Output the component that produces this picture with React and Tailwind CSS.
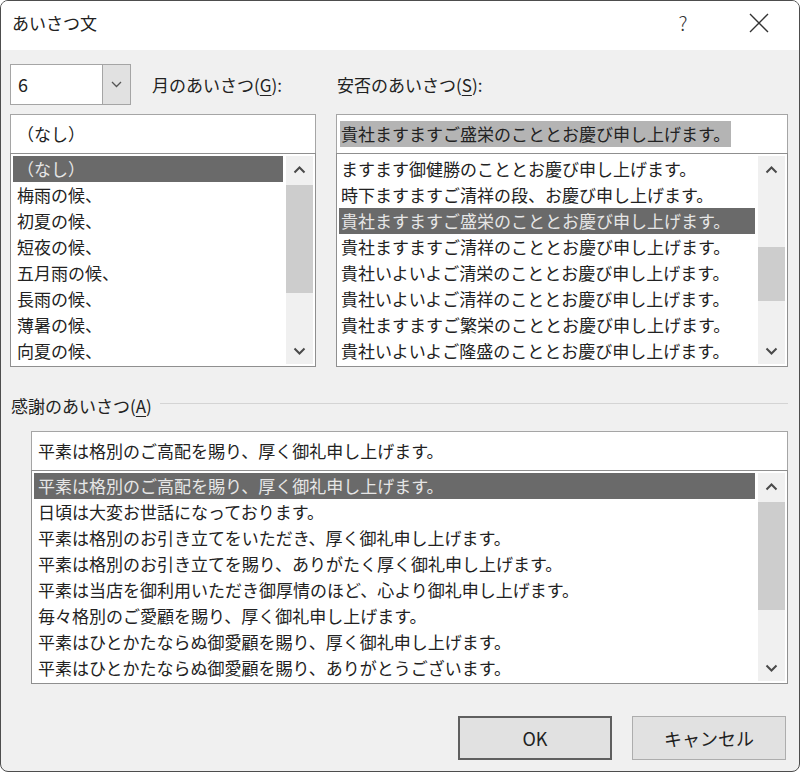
import React from 'react'

const monthItems = ['（なし）', '梅雨の候、', '初夏の候、', '短夜の候、', '五月雨の候、', '長雨の候、', '薄暑の候、', '向夏の候、']
const safetyItems = [
  'ますます御健勝のこととお慶び申し上げます。',
  '時下ますますご清祥の段、お慶び申し上げます。',
  '貴社ますますご盛栄のこととお慶び申し上げます。',
  '貴社ますますご清祥のこととお慶び申し上げます。',
  '貴社いよいよご清栄のこととお慶び申し上げます。',
  '貴社いよいよご清祥のこととお慶び申し上げます。',
  '貴社ますますご繁栄のこととお慶び申し上げます。',
  '貴社いよいよご隆盛のこととお慶び申し上げます。',
]
const thanksItems = [
  '平素は格別のご高配を賜り、厚く御礼申し上げます。',
  '日頃は大変お世話になっております。',
  '平素は格別のお引き立てをいただき、厚く御礼申し上げます。',
  '平素は格別のお引き立てを賜り、ありがたく厚く御礼申し上げます。',
  '平素は当店を御利用いただき御厚情のほど、心より御礼申し上げます。',
  '毎々格別のご愛顧を賜り、厚く御礼申し上げます。',
  '平素はひとかたならぬ御愛顧を賜り、厚く御礼申し上げます。',
  '平素はひとかたならぬ御愛顧を賜り、ありがとうございます。',
]

const Chevron = ({ up, className = '' }) => (
  <svg width="13" height="8" viewBox="0 0 13 8" className={className}>
    <polyline
      points={up ? '1.5,6.5 6.5,1.5 11.5,6.5' : '1.5,1.5 6.5,6.5 11.5,1.5'}
      fill="none"
      stroke="#4a4a4a"
      strokeWidth="2"
    />
  </svg>
)

// vertical scrollbar: arrow, track with thumb, arrow
const ScrollBar = ({ thumbOffset, thumbHeight }) => (
  <div className="w-[27px] flex flex-col bg-[#f0f0f0]">
    <div className="h-[27px] flex items-center justify-center">
      <Chevron up />
    </div>
    <div className="flex-1 flex flex-col">
      <div className={thumbOffset} />
      <div className={`${thumbHeight} bg-[#cdcdcd]`} />
    </div>
    <div className="h-[27px] flex items-center justify-center">
      <Chevron />
    </div>
  </div>
)

const ListBox = ({ items, selected, pad, thumbOffset, thumbHeight }) => (
  <div className="h-[214px] border border-[#8f8f8f] bg-white p-[2px] flex gap-[3px]">
    <div className="flex-1 flex flex-col overflow-hidden">
      {items.map((item, i) => (
        <div
          key={i}
          className={`h-[26px] shrink-0 leading-[26px] whitespace-nowrap ${pad} ${
            i === selected ? 'bg-[#6a6a6a] text-[#e6e6e6]' : 'text-[#222]'
          }`}
        >
          {item}
        </div>
      ))}
    </div>
    <ScrollBar thumbOffset={thumbOffset} thumbHeight={thumbHeight} />
  </div>
)

export default function App() {
  return (
    <div className="w-[800px] h-[772px] border border-[#4d4d4d] rounded-[8px] overflow-hidden bg-[#f0f0f0] flex flex-col text-[17px] text-[#222] font-['Noto_Sans_CJK_JP','Noto_Sans',sans-serif]">
      {/* title bar */}
      <div className="h-[49px] bg-white flex items-center pl-[11px] pb-[6px] shrink-0">
        <span className="flex-1 text-[17px]">あいさつ文</span>
        <span className="w-[30px] text-center text-[20px] font-light text-[#333] mr-[51px]">?</span>
        <svg width="20" height="20" viewBox="0 0 20 20" className="mr-[30px]">
          <path d="M1 1 L19 19 M19 1 L1 19" stroke="#333" strokeWidth="1.4" />
        </svg>
      </div>

      <div className="pl-[9px] pr-[11px] pt-[14px] flex flex-col">
        <div className="grid grid-cols-[306px_452px] gap-x-[20px]">
          {/* left column */}
          <div className="flex flex-col">
            <div className="flex items-center h-[41px]">
              <div className="w-[121px] h-[41px] border border-[#a5a5a5] bg-white flex">
                <div className="flex-1 pl-[7px] leading-[39px] text-[18px]">6</div>
                <div className="w-[28px] bg-[#e1e1e1] border-l border-[#a5a5a5] flex items-center justify-center">
                  <svg width="11" height="7" viewBox="0 0 11 7">
                    <polyline points="1,1 5.5,5.5 10,1" fill="none" stroke="#555" strokeWidth="1.3" />
                  </svg>
                </div>
              </div>
              <span className="ml-[21px]">
                月のあいさつ(<span className="underline underline-offset-[3px]">G</span>):
              </span>
            </div>
            <div className="mt-[9px] h-[39px] border border-[#a5a5a5] border-b-0 bg-white pl-[6px] leading-[38px]">
              （なし）
            </div>
            <ListBox items={monthItems} selected={0} pad="pl-[4px]" thumbOffset="h-[2px]" thumbHeight="h-[108px]" />
          </div>

          {/* right column */}
          <div className="flex flex-col">
            <div className="flex items-center h-[41px]">
              <span className="ml-px">
                安否のあいさつ(<span className="underline underline-offset-[3px]">S</span>):
              </span>
            </div>
            <div className="mt-[9px] h-[39px] border border-[#a5a5a5] border-b-0 bg-white pl-[3px] flex items-center">
              <span className="bg-[#b4b4b4] px-[1px] leading-[26px]">貴社ますますご盛栄のこととお慶び申し上げます。</span>
            </div>
            <ListBox items={safetyItems} selected={2} pad="pl-[2px]" thumbOffset="h-[64px]" thumbHeight="h-[54px]" />
          </div>
        </div>

        {/* thanks section */}
        <div className="mt-[26px] h-[26px] flex items-center">
          <span className="ml-px">
            感謝のあいさつ(<span className="underline underline-offset-[3px]">A</span>)
          </span>
          <div className="flex-1 h-px bg-[#d4d4d4] ml-[8px] mb-[6px]" />
        </div>
        <div className="ml-[21px] mt-[12px] flex flex-col">
          <div className="h-[39px] border border-[#a5a5a5] border-b-0 bg-white pl-[6px] leading-[38px]">
            平素は格別のご高配を賜り、厚く御礼申し上げます。
          </div>
          <ListBox items={thanksItems} selected={0} pad="pl-[4px]" thumbOffset="h-[2px]" thumbHeight="h-[108px]" />
        </div>

        {/* buttons */}
        <div className="mt-[32px] flex justify-end gap-[20px] pr-[2px]">
          <button className="w-[154px] h-[44px] border-2 border-[#5f5f5f] bg-[#e1e1e1] text-[18px]">OK</button>
          <button className="w-[154px] h-[44px] border border-[#adadad] bg-[#e1e1e1] text-[18px]">キャンセル</button>
        </div>
      </div>
    </div>
  )
}
